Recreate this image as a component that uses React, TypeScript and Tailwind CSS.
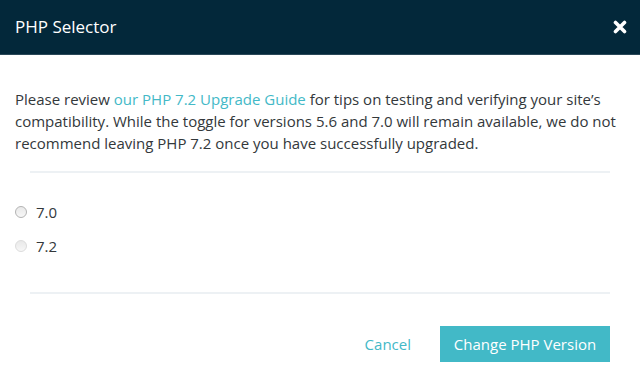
import React from "react";

function Radio({ strong }: { strong?: boolean }) {
  return (
    <span
      className={
        "inline-block w-[12px] h-[12px] rounded-full border bg-gradient-to-b from-[#e9e9e9] to-[#f7f7f7] " +
        (strong ? "border-[#b3b3b3]" : "border-[#dcdcdc]")
      }
    />
  );
}

export default function App() {
  return (
    <div
      className="w-[640px] h-[387px] bg-white flex flex-col"
      style={{ fontFamily: '"Open Sans", sans-serif' }}
    >
      <div className="h-[55px] bg-[#03283a] border-b border-[#2a4858] flex items-center justify-between pl-[15px] pr-[13px]">
        <span className="text-[17px] text-white leading-none pb-[2px]">PHP Selector</span>
        <svg width="14" height="14" viewBox="0 0 14 14" className="mb-[1px]">
          <path d="M2.5 2.5 L11.5 11.5 M11.5 2.5 L2.5 11.5" stroke="white" strokeWidth="3.6" strokeLinecap="round" />
        </svg>
      </div>
      <div className="flex-1 flex flex-col">
        <p className="px-[15px] pt-[33px] text-[15px] leading-[22px] text-[#33383b] tracking-[0px]">
          Please review <span className="text-[#43b9c7]">our PHP 7.2 Upgrade Guide</span> for tips on testing and verifying your site’s compatibility. While the toggle for versions 5.6 and 7.0 will remain available, we do not recommend leaving PHP 7.2 once you have successfully upgraded.
        </p>
        <div className="mx-[30px] mt-[17px] h-[2px] bg-[#edf1f4]" />
        <div className="flex flex-col pl-[15px] pt-[28px] gap-[12px]">
          <label className="flex items-center gap-[9px] h-[22px] text-[15px] text-[#33383b]">
            <Radio strong />
            <span>7.0</span>
          </label>
          <label className="flex items-center gap-[9px] h-[22px] text-[15px] text-[#33383b]">
            <Radio />
            <span>7.2</span>
          </label>
        </div>
        <div className="mx-[30px] mt-[35px] h-[2px] bg-[#edf1f4]" />
        <div className="flex items-center justify-end pr-[30px] pt-[32px] gap-[29px]">
          <span className="text-[15px] text-[#43b9c7]">Cancel</span>
          <button className="h-[36px] w-[170px] bg-[#42b9c7] text-white text-[15px] flex items-center justify-center">
            Change PHP Version
          </button>
        </div>
      </div>
    </div>
  );
}
